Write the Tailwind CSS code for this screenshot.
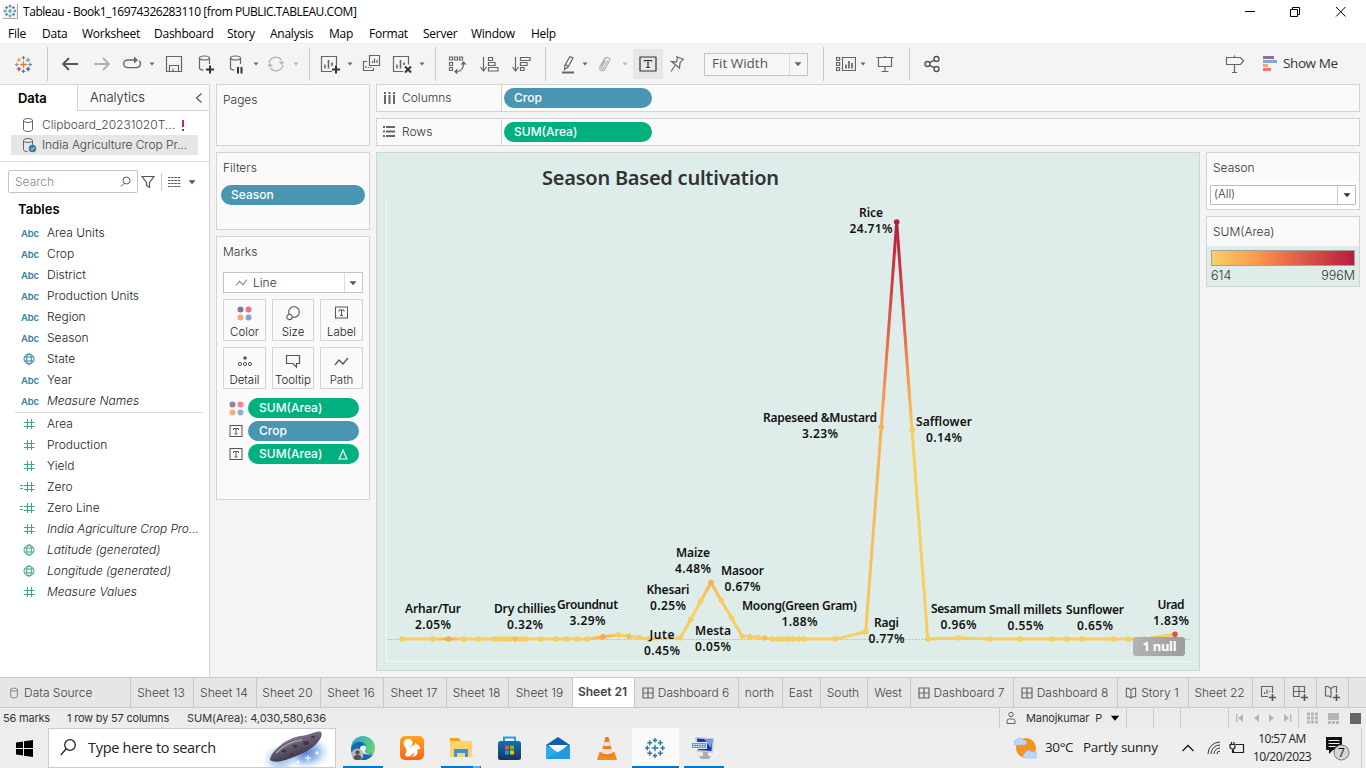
<!DOCTYPE html>
<html lang="en">
<head>
<meta charset="utf-8">
<title>Tableau - Book1_16974326283110</title>
<script src="https://cdn.jsdelivr.net/npm/@tailwindcss/browser@4"></script>
</head>
<body class="w-[1366px] h-[768px] overflow-hidden bg-[#f4f4f4] flex flex-col font-['Inter','Liberation_Sans',sans-serif] font-light text-[12px] text-[#222] whitespace-nowrap leading-none">
<svg class="hidden">
  <defs>
    <symbol id="tab" viewBox="0 0 20 20"><g fill="none" stroke-width="1.1"><path stroke="#e8762c" stroke-width="1.400" d="M10 6.500v7M6.500 10h7"/><path stroke="#59879b" d="M10 1v4M8 3h4M17 8v4M15 10h4"/><path stroke="#7099a6" d="M3 8v4M1 10h4"/><path stroke="#5b6591" d="M10 15v4M8 17h4"/><path stroke="#eb912c" d="M5.200 3v4.400M3 5.200h4.400"/><path stroke="#1f457e" d="M14.800 12.600v4.400M12.600 14.800h4.400"/><path stroke="#c72035" d="M5.200 12.600v4.400M3 14.800h4.400"/><path stroke="#59879b" d="M14.800 3v4.400M12.600 5.200h4.400"/></g></symbol>
    <symbol id="tabb" viewBox="0 0 20 20"><path fill="none" stroke="#2b7a9e" stroke-width="1.250" d="M10 7v6M7 10h6M10 1v4M8 3h4M17 8v4M15 10h4M3 8v4M1 10h4M10 15v4M8 17h4M5.200 3v4.400M3 5.200h4.400M14.800 12.600v4.400M12.600 14.800h4.400M5.200 12.600v4.400M3 14.800h4.400M14.800 3v4.400M12.600 5.200h4.400"/></symbol>
    <symbol id="caret" viewBox="0 0 8 8"><path fill="currentColor" d="M1.500 2.500h5L4 5.500z"/></symbol>
    <symbol id="car" viewBox="0 0 10 10"><path fill="currentColor" d="M1.500 3.200h7L5 7.200z"/></symbol>
    <symbol id="cyl" viewBox="0 0 12 16"><g fill="none" stroke="#666"><ellipse cx="6" cy="3.500" rx="4.500" ry="2"/><path d="M1.500 3.500v9c0 2.600 9 2.600 9 0v-9"/></g></symbol>
    <symbol id="globe" viewBox="0 0 12 12"><g fill="none" stroke="currentColor"><circle cx="6" cy="6" r="5"/><ellipse cx="6" cy="6" rx="2.300" ry="5"/><path d="M1.500 4h9M1.500 8h9"/></g></symbol>
    <symbol id="hash" viewBox="0 0 12 12"><path fill="none" stroke="#40a587" d="M4.500 1v10M8.500 1v10M1 4.500h10.500M1 8.500h10.500"/></symbol>
    <symbol id="ehash" viewBox="0 0 16 12"><path fill="none" stroke="#40a587" d="M8.500 1v10M12.500 1v10M5 4.500h10.500M5 8.500h10.500M1 4.500h3M1 7.500h3"/></symbol>
    <symbol id="tbox" viewBox="0 0 14 13"><rect x=".5" y=".5" width="12" height="11" fill="none" stroke="#555"/><path fill="none" stroke="#555" d="M4 5V3.500h5V5M6.500 3.500V9M5 9h3"/></symbol>
    <symbol id="dots" viewBox="0 0 15 15"><circle cx="3.500" cy="3.500" r="3" fill="#8b729b"/><circle cx="11.500" cy="3.500" r="3" fill="#fa7082"/><circle cx="3.500" cy="11.500" r="3" fill="#f3a678"/><circle cx="11.500" cy="11.500" r="3" fill="#83a8cf"/></symbol>
    <symbol id="dash" viewBox="0 0 12 12"><path fill="none" stroke="#666" stroke-width="1.200" d="M1 1h10v10H1zM6 1v10M1 6h10"/></symbol>
    <symbol id="story" viewBox="0 0 12 13"><path fill="none" stroke="#666" stroke-width="1.200" d="M1 1.500h2.500L6 3.500l2.500-2H11v9H8L6 12l-2-1.500H1zM6 3.500V12"/></symbol>
    <symbol id="squig" viewBox="0 0 16 12"><path fill="none" stroke="currentColor" stroke-width="1.300" d="M1 9l4-5 4 4 5-6"/></symbol>
  </defs>
</svg>

<!-- Title bar -->
<header class="h-[23px] shrink-0 bg-white text-black font-normal flex items-center font-['Open_Sans','Noto_Sans',sans-serif]">
  <span class="ml-[3px] w-[15px] h-[15px] bg-[#f4f4f4] border-r border-b border-[#aaa]"><svg class="w-[14px] h-[14px]"><use href="#tabb"/></svg></span>
  <span class="ml-[5px] text-[12px] tracking-[-0.45px]">Tableau - Book1_16974326283110 [from PUBLIC.TABLEAU.COM]</span>
  <svg class="ml-auto mr-[18px] mb-[2px] w-[104px] h-[14px]" viewBox="0 0 104 14" fill="none" stroke="#000"><path d="M1 7.500h10"/><path d="M46.500 5.500h7v7h-7zM48.500 5.500v-2h7v7h-2"/><path d="M92 3l9.500 9.500M101.500 3L92 12.500"/></svg>
</header>

<!-- Menu -->
<nav class="h-5 shrink-0 bg-white text-black font-normal flex items-center pl-2 pt-px text-[12px] tracking-[-0.25px] font-['Open_Sans','Noto_Sans',sans-serif]">
  <span class="w-[34px]">File</span><span class="w-10">Data</span><span class="w-[72px]">Worksheet</span><span class="w-[73px]">Dashboard</span><span class="w-[43px]">Story</span><span class="w-[59px]">Analysis</span><span class="w-10">Map</span><span class="w-[54px]">Format</span><span class="w-12">Server</span><span class="w-[60px]">Window</span><span>Help</span>
</nav>

<!-- Toolbar -->
<div class="h-[41px] shrink-0 border-t border-[#efefef] flex items-center text-[#666] [&>*]:shrink-0">
  <svg class="ml-[14px] w-[19px] h-[19px]"><use href="#tab"/></svg>
  <i class="ml-[14px] w-px h-[34px] bg-[#ccc]"></i>
  <svg class="ml-3 w-5 h-5" fill="none" stroke="#555" stroke-width="1.800"><path d="M18 10H3M9 4l-6 6 6 6"/></svg>
  <svg class="ml-3 w-5 h-5" fill="none" stroke="#b0b0b0" stroke-width="1.800"><path d="M2 10h15M11 4l6 6-6 6"/></svg>
  <svg class="ml-2.5 w-5 h-5" fill="none" stroke="#666" stroke-width="1.400"><path d="M13 6H5.500a3.800 3.800 0 0 0 0 7.600h9A3.800 3.800 0 0 0 17 6.800"/><path fill="#666" stroke="none" d="M12 2.500v7l4-3.500z"/></svg>
  <svg class="ml-1.5 w-2 h-2"><use href="#caret"/></svg>
  <svg class="ml-2 w-5 h-5" fill="none" stroke="#666" stroke-width="1.200"><path d="M2.500 2.500h15v15h-15zM5.500 17.500v-6h9v6M9 17.500v-3"/></svg>
  <svg class="ml-[11px] w-5 h-5" fill="none" stroke="#666" stroke-width="1.200"><ellipse cx="9.500" cy="4" rx="5" ry="2"/><path d="M4.500 4v10c0 1 1.500 2 4 2M14.500 4v6"/><path stroke="#333" stroke-width="2" d="M15 11.500v8M11 15.500h8"/></svg>
  <svg class="ml-[11px] w-5 h-5" fill="none" stroke="#666" stroke-width="1.200"><ellipse cx="9.500" cy="4" rx="5" ry="2"/><path d="M4.500 4v10c0 1 1.500 2 4 2M14.500 4v6"/><path stroke="#333" stroke-width="2" d="M12 13v6.500M15.500 13v6.500"/></svg>
  <svg class="ml-1.5 w-2 h-2"><use href="#caret"/></svg>
  <svg class="ml-1.5 w-5 h-5" fill="none" stroke="#b5b5b5" stroke-width="1.400"><path d="M3 9a7 7 0 0 1 12.500-3M17 11A7 7 0 0 1 4.500 14"/><path fill="#b5b5b5" stroke="none" d="M12.500 7.500h6L15.500 11zM1 12.500h6L4 9z"/></svg>
  <svg class="ml-1.5 w-2 h-2 text-[#b5b5b5]"><use href="#caret"/></svg>
  <i class="ml-[9px] w-px h-[34px] bg-[#ccc]"></i>
  <svg class="ml-2.5 w-5 h-5" fill="none" stroke="#666" stroke-width="1.200"><path d="M12 17.500H1.500v-15h15v9"/><path stroke-width="1.600" d="M5 14.500v-4M8.500 14.500V6M12 12V8.500"/><path stroke="#333" stroke-width="2" d="M16 11.500v8M12 15.500h8"/></svg>
  <svg class="ml-1.5 w-2 h-2"><use href="#caret"/></svg>
  <svg class="ml-[7px] w-5 h-5" fill="none" stroke="#666" stroke-width="1.200"><path d="M8.500 1.500h10v10h-10zM6 7.500H2.500v9h10V14"/><path d="M11.500 9V7M13.500 9V4.500M16 9V6M5 14v-2M7.500 14v-1M10 14v-1"/></svg>
  <svg class="ml-[11px] w-5 h-5" fill="none" stroke="#666" stroke-width="1.200"><path d="M11 17.500H1.500v-15h15v8"/><path stroke-width="1.600" d="M5 14.500v-4M8.500 14.500V6M12 11V8.500"/><path stroke="#333" stroke-width="2" d="M13 12.500l6 6M19 12.500l-6 6"/></svg>
  <svg class="ml-1.5 w-2 h-2"><use href="#caret"/></svg>
  <i class="ml-[9px] w-px h-[34px] bg-[#ccc]"></i>
  <svg class="ml-[11px] w-5 h-5" fill="none" stroke="#666" stroke-width="1.200"><path d="M2.500 3h3v3h-3zM7.500 3h3v3h-3zM12.500 3h3v3h-3zM2.500 8.500h3v3h-3zM2.500 13.500h3v3h-3zM16.500 9c0 5-2 8-6 8.500"/><path fill="#666" stroke="none" d="M13.500 10.500l3-3.500 3 3.500zM10.500 14.500v6L7 17.500z"/></svg>
  <svg class="ml-[13px] w-5 h-5" fill="none" stroke="#666" stroke-width="1.200"><path d="M3.500 3v14M.500 13l3 4 3-4M8.500 3.500h4v3h-4zM8.500 8.500h6.500v3H8.500zM8.500 13.500H18v3.500H8.500z"/></svg>
  <svg class="ml-3 w-5 h-5" fill="none" stroke="#666" stroke-width="1.200"><path d="M3.500 3v14M.500 13l3 4 3-4M8.500 3.500H18v3H8.500zM8.500 8.500h6.500v3H8.500zM8.500 13.500h3.500v3H8.500z"/></svg>
  <i class="ml-[13px] w-px h-[34px] bg-[#ccc]"></i>
  <svg class="ml-3 w-5 h-5" fill="none" stroke="#666" stroke-width="1.200"><path d="M12 2.500l3 1.500-5 9-3.500 2.500L7 11zM7.500 10.500l3 2"/><path stroke-width="2" d="M4 18.500h12"/></svg>
  <svg class="ml-[3px] w-2 h-2"><use href="#caret"/></svg>
  <svg class="ml-1.5 w-5 h-5" fill="none" stroke="#b0b0b0" stroke-width="1.200"><path d="M6.500 11l4-6.500c1.500-2.500 5.500-.5 4 2.300L10 15c-2 3.500-6.500 1-5-2.200l5.500-9.500M12.500 6.500L8.500 14c-1 1.200-2.500.5-2-1l3.500-6"/></svg>
  <svg class="ml-1.5 w-2 h-2 text-[#b5b5b5]"><use href="#caret"/></svg>
  <span class="ml-1 w-[30px] h-[30px] bg-[#e6e6e6] flex items-center justify-center"><svg class="w-[18px] h-4" fill="none" stroke="#333" stroke-width="1.200"><path d="M1 1h16v14H1zM5.500 5.500V4.500h7v1M9 4.500v7M7 11.500h4"/></svg></span>
  <svg class="ml-1 w-5 h-5" fill="none" stroke="#666" stroke-width="1.200"><path d="M9 2.500l8 3M10.500 3.500L9.500 8l-5-.5 8 6.500 .5-5 3-4M8 11.500l-4 6"/></svg>
  <span class="ml-[17px] w-[104px] h-[23px] bg-[#f6f6f6] border border-[#c4c4c4] flex items-center"><span class="ml-[7px] w-[77px] text-[13.500px] font-normal text-[#555] font-['Open_Sans']">Fit Width</span><span class="h-full flex items-center border-l border-[#ddd] pl-[3px]"><svg class="w-2.5 h-2.5"><use href="#car"/></svg></span></span>
  <i class="ml-[15px] w-px h-[34px] bg-[#ccc]"></i>
  <svg class="ml-3 w-5 h-5" fill="none" stroke="#666" stroke-width="1.200"><path d="M.600 3.500h3v3h-3zM.600 8.500h3v3h-3zM.600 13.500h3v3h-3zM6.500 3.500h13v13h-13z"/><path stroke-width="1.700" d="M10 14.500v-4M13 14.500V7M16 14.500V9"/></svg>
  <svg class="ml-[3px] w-2 h-2"><use href="#caret"/></svg>
  <svg class="ml-2 w-5 h-5" fill="none" stroke="#666" stroke-width="1.200"><path d="M1.500 3.500h17M3.500 3.500v9h13v-9M10 2v2M10 12.500v5M6.500 17.500h7"/></svg>
  <i class="ml-[14px] w-px h-[34px] bg-[#ccc]"></i>
  <svg class="ml-3 w-5 h-5" fill="none" stroke="#555" stroke-width="1.400"><circle cx="5.500" cy="10" r="2.500"/><circle cx="14.500" cy="5" r="2.500"/><circle cx="14.500" cy="15" r="2.500"/><path d="M7.700 8.700l4.600-2.500M7.700 11.300l4.600 2.500"/></svg>
  <svg class="ml-[283px] w-5 h-5" fill="none" stroke="#666" stroke-width="1.200"><path d="M1.500 3.500h14l3 3.500-3 3.500h-14zM9.500 1.500v2M9.500 10.500v8M7 18.500h5"/></svg>
  <svg class="ml-[18px] w-[15px] h-4"><path fill="#8b729b" d="M0 0h11v3H0z"/><path fill="#83a8cf" d="M0 4h14v3H0z"/><path fill="#f3a678" d="M0 8h5v3H0z"/><path fill="#fa7082" d="M0 12h8v3H0z"/></svg>
  <span class="ml-[5px] text-[13.500px] font-normal text-[#333] font-['Open_Sans'] tracking-[-0.4px]">Show Me</span>
</div>

<!-- Workspace -->
<main class="h-[593px] shrink-0 flex">
  <!-- Data pane -->
  <aside class="w-[210px] border-t border-r border-[#d4d4d4] bg-white flex flex-col">
    <div class="h-[26px] shrink-0 flex">
      <div class="w-[77px] pl-[18px] flex items-center font-semibold text-[13px] text-black tracking-[-0.1px]">Data</div>
      <div class="flex-1 bg-[#fafafa] border-l border-b border-[#d4d4d4] flex items-center pl-3 text-[13px]">Analytics<svg class="ml-auto mr-1.5 w-2 h-3" fill="none" stroke="#555" stroke-width="1.200"><path d="M6.500 1.500L1.500 6l5 4.500"/></svg></div>
    </div>
    <div class="mt-1 h-5 flex items-center pl-[22px] text-[#444]"><svg class="w-3 h-4"><use href="#cyl"/></svg><span class="ml-2 w-[136px]">Clipboard_20231020T...</span><b class="ml-1 w-[2px] flex flex-col gap-0.5"><i class="h-[7px] bg-[#c92a3c]"></i><i class="h-0.5 bg-[#c92a3c]"></i></b></div>
    <div class="h-5 ml-[11px] w-[187px] bg-[#e6e6e6] flex items-center pl-[11px] text-[#444]"><svg class="w-[15px] h-4" viewBox="0 0 15 16"><g fill="none" stroke="#666"><ellipse cx="6" cy="3.500" rx="4.500" ry="2"/><path d="M1.500 3.500v9c0 1.500 2 2 4 2M10.500 3.500V8"/></g><circle cx="10.500" cy="11.500" r="3.800" fill="#2f7fa3"/><path d="M8.800 11.500l1.300 1.300 2.300-2.500" fill="none" stroke="#fff"/></svg><span class="ml-[5px] tracking-[-0.05px]">India Agriculture Crop Pr...</span></div>
    <div class="mt-1.5 h-px shrink-0 bg-[#dcdcdc]"></div>
    <div class="mt-2 h-[23px] shrink-0 flex items-center pl-2">
      <div class="w-[130px] h-full border border-[#c4c4c4] rounded-[2px] flex items-center pl-1.5 text-[#888]">Search<svg class="ml-auto mr-1.5 w-[11px] h-3" fill="none" stroke="#555"><circle cx="6.500" cy="4.500" r="3.500"/><path d="M4 7.500L1 10.500"/></svg></div>
      <svg class="ml-[3px] w-3.5 h-3.5" fill="none" stroke="#555" stroke-width="1.200"><path d="M1 1.500h12L8.500 7.500v5l-3-2v-3z"/></svg>
      <i class="ml-[6px] w-px h-[18px] bg-[#ccc]"></i>
      <svg class="ml-1.5 w-[13px] h-2.5" stroke="#555" stroke-dasharray="2.500 .700"><path d="M0 .500h13M0 3.500h13M0 6.500h13M0 9.500h13"/></svg>
      <svg class="ml-[6px] w-2.5 h-2.5 text-[#555]"><use href="#car"/></svg>
    </div>
    <div class="h-[29px] pl-[18px] pt-[3px] flex items-center font-semibold text-[13px] text-black tracking-[0.05px]">Tables</div>
    <ul class="[&>li]:h-[21px] [&>li]:flex [&>li]:items-center [&_b]:w-8 [&_b]:text-[9.500px] [&_b]:font-semibold [&_b]:tracking-[-0.2px] [&_b]:text-[#35809d] [&_b]:pt-0.5 pl-[15px] [&_b]:pl-1.5 [&_svg]:ml-[8px] [&_svg]:mr-[12px] [&_svg]:w-3 [&_svg]:h-3 text-[12px]">
      <li><b>Abc</b>Area Units</li><li><b>Abc</b>Crop</li><li><b>Abc</b>District</li><li><b>Abc</b>Production Units</li><li><b>Abc</b>Region</li><li><b>Abc</b>Season</li>
      <li><svg class="text-[#35809d]"><use href="#globe"/></svg>State</li><li><b>Abc</b>Year</li><li class="italic"><b class="not-italic">Abc</b>Measure Names</li>
    </ul>
    <div class="mt-px mx-[15px] mr-[6px] h-px shrink-0 bg-[#dcdcdc]"></div>
    <ul class="[&>li]:h-[21px] [&>li]:flex [&>li]:items-center [&_svg]:ml-[23px] [&_svg]:mr-[12px] [&_svg]:w-3 [&_svg]:h-3 text-[12px] text-[#40a587] [&_span]:text-[#222]">
      <li><svg><use href="#hash"/></svg><span>Area</span></li>
      <li><svg><use href="#hash"/></svg><span>Production</span></li>
      <li><svg><use href="#hash"/></svg><span>Yield</span></li>
      <li><svg class="w-4! ml-[19px]!"><use href="#ehash"/></svg><span>Zero</span></li>
      <li><svg class="w-4! ml-[19px]!"><use href="#ehash"/></svg><span>Zero Line</span></li>
      <li class="italic"><svg><use href="#hash"/></svg><span class="tracking-[-0.1px]">India Agriculture Crop Pro...</span></li>
      <li class="italic"><svg><use href="#globe"/></svg><span>Latitude (generated)</span></li>
      <li class="italic"><svg><use href="#globe"/></svg><span>Longitude (generated)</span></li>
      <li class="italic"><svg><use href="#hash"/></svg><span>Measure Values</span></li>
    </ul>
  </aside>

  <!-- Cards -->
  <section class="ml-1.5 w-[154px] flex flex-col gap-1.5 text-[#333]">
    <div class="h-[62px] bg-[#fafafa] border border-[#d4d4d4] pl-1.5 pt-[9px]">Pages</div>
    <div class="h-[78px] bg-[#fafafa] border border-[#d4d4d4] px-1 pt-[9px]"><p class="pl-0.5">Filters</p><p class="mt-[11px] h-5 rounded-full bg-[#4996b2] text-white font-medium pl-2.5 flex items-center">Season</p></div>
    <div class="h-[264px] bg-[#fafafa] border border-[#d4d4d4] px-1.5 pt-[9px]">
      <p>Marks</p>
      <div class="mt-[14px] h-[21px] w-[140px] bg-white border border-[#c4c4c4] flex items-center pl-[11px]"><svg class="w-3.5 h-2.5 text-[#888]"><use href="#squig"/></svg><span class="ml-1 w-[94px]">Line</span><span class="h-full flex items-center border-l border-[#ddd] -ml-[3px] pl-[3px] text-[#555]"><svg class="w-2.5 h-2.5"><use href="#car"/></svg></span></div>
      <div class="mt-1.5 w-[140px] grid grid-cols-[43px_42px_43px] gap-x-1.5 gap-y-1.5 text-[11.500px] text-[#222] [&>div]:h-[42px] [&>div]:border [&>div]:border-[#d4d4d4] [&>div]:flex [&>div]:flex-col [&>div]:items-center [&>div]:justify-between [&>div]:pt-[6px] [&>div]:pb-[2px]">
        <div><svg class="w-[15px] h-[15px]"><use href="#dots"/></svg>Color</div>
        <div><svg class="w-4 h-4" fill="none" stroke="#666" stroke-width="1.200"><circle cx="9" cy="6" r="5.300"/><circle cx="4.500" cy="11" r="2.700" fill="#fafafa"/></svg>Size</div>
        <div><svg class="w-3.5 h-3.5"><use href="#tbox"/></svg>Label</div>
        <div><svg class="w-4 h-4" fill="none" stroke="#555"><circle cx="8" cy="4" r="1.800" fill="#555" stroke="none"/><circle cx="3" cy="10" r="1.600"/><circle cx="8" cy="10" r="1.600"/><circle cx="13" cy="10" r="1.600"/></svg>Detail</div>
        <div><svg class="w-4 h-4" fill="none" stroke="#555" stroke-width="1.200"><path d="M1.500 1.500h13v8h-3v3.500L8 9.500H1.500z"/></svg>Tooltip</div>
        <div class="text-[#333]"><svg class="w-4 h-4 text-[#555]"><use href="#squig"/></svg>Path</div>
      </div>
      <div class="mt-[9px] flex flex-col gap-[3px] pl-1.5 [&>div]:flex [&>div]:items-center [&>div]:gap-1 [&_span]:w-[111px] [&_span]:shrink-0 [&_span]:h-5 [&_span]:rounded-full [&_span]:pl-[11px] [&_span]:flex [&_span]:items-center text-white font-medium [&_svg]:w-[15px] [&_svg]:shrink-0">
        <div><svg class="h-[15px] opacity-90"><use href="#dots"/></svg><span class="bg-[#00b180]">SUM(Area)</span></div>
        <div><svg class="h-[13px]"><use href="#tbox"/></svg><span class="bg-[#4996b2]">Crop</span></div>
        <div><svg class="h-[13px]"><use href="#tbox"/></svg><span class="bg-[#00b180]">SUM(Area)<svg class="ml-auto mr-[11px] w-2.5! h-[11px]" fill="none" stroke="#fff" stroke-width="1.200"><path d="M5 1L1.200 10h7.600z"/></svg></span></div>
      </div>
    </div>
  </section>

  <!-- Shelves, view and legends -->
  <section class="ml-1.5 w-[984px] flex flex-col gap-1.5 text-[#333]">
    <div class="h-7 bg-[#fafafa] border border-[#d4d4d4] flex items-center"><div class="w-[125px] h-full border-r border-[#d4d4d4] flex items-center pl-1.5"><svg class="w-3 h-3" stroke="#666" stroke-width="2"><path stroke-dasharray="2 1 20" d="M2 0v12M6.500 0v12M11 0v12"/></svg><span class="ml-[7px]">Columns</span></div><span class="ml-0.5 w-[148px] h-5 rounded-full bg-[#4996b2] text-white font-medium flex items-center pl-2.5">Crop</span></div>
    <div class="h-7 bg-[#fafafa] border border-[#d4d4d4] flex items-center"><div class="w-[125px] h-full border-r border-[#d4d4d4] flex items-center pl-1.5"><svg class="w-3 h-3 -mt-[3px]" stroke="#666" stroke-width="2"><path stroke-dasharray="2 1 20" d="M0 2h12M0 6.500h12M0 11h12"/></svg><span class="ml-[7px]">Rows</span></div><span class="ml-0.5 w-[148px] h-5 rounded-full bg-[#00b180] text-white font-medium flex items-center pl-2.5">SUM(Area)</span></div>
    <div class="flex items-start gap-1.5">
      <svg class="w-[824px] h-[519px] shrink-0 font-['Noto_Sans','Open_Sans',sans-serif] font-semibold" viewBox="376 152 824 519">
        <defs>
          <linearGradient id="gl" gradientUnits="userSpaceOnUse" x1="0" y1="222" x2="0" y2="632"><stop offset="0" stop-color="#b71d3e"/><stop offset=".2" stop-color="#d94b47"/><stop offset=".36" stop-color="#f5834a"/><stop offset=".5" stop-color="#f8b058"/><stop offset="1" stop-color="#f6c95f"/></linearGradient>
          <linearGradient id="gr" gradientUnits="userSpaceOnUse" x1="0" y1="222" x2="0" y2="639"><stop offset="0" stop-color="#b71d3e"/><stop offset=".2" stop-color="#d94b47"/><stop offset=".35" stop-color="#f98b4b"/><stop offset=".5" stop-color="#f5cf60"/><stop offset="1" stop-color="#f5cf60"/></linearGradient>
          <linearGradient id="gb" gradientUnits="userSpaceOnUse" x1="402" y1="0" x2="866" y2="0"><stop offset="0" stop-color="#f5cf60"/><stop offset=".07" stop-color="#f5cf60"/><stop offset=".1" stop-color="#fba94f"/><stop offset=".13" stop-color="#f5cf60"/><stop offset=".4" stop-color="#f5cf60"/><stop offset=".433" stop-color="#fba94f"/><stop offset=".465" stop-color="#f5cf60"/><stop offset=".64" stop-color="#f5cf60"/><stop offset=".666" stop-color="#f9b555"/><stop offset=".7" stop-color="#f5cf60"/><stop offset="1" stop-color="#f5cf60"/></linearGradient>
          <linearGradient id="nul"><stop offset="0" stop-color="#b1b4b2"/><stop offset="1" stop-color="#9b9d9c"/></linearGradient>
        </defs>
        <rect x="376.500" y="152.500" width="823" height="518" fill="#dfedea" stroke="#d0d4d3"/>
        <path d="M386.500 199.500v462H1191" fill="none" stroke="#f4f8f7"/>
        <path d="M387 639.500h803" stroke="#bfc6c4" stroke-dasharray="2 1"/>
        <g fill="none" stroke-width="3" stroke-linejoin="round">
          <path stroke="url(#gb)" d="M402 639H587.300L603 636.800 618.300 635 628.700 636.300 639 637.700 649 639 680.300 638 690.700 619.500 700.700 601 711 582.500 721.300 600.500 731.700 618 742 636 757.700 637.500 772.700 639.100H835L865.700 631.700"/>
          <path stroke="url(#gl)" d="M865.700 631.700L881.300 427 896.700 222"/>
          <path stroke="url(#gr)" d="M896.700 222L912 430 927.700 639"/>
          <path stroke="#f5cf60" d="M927.700 639L958.700 638 989.700 639H1144L1175 634.300"/>
        </g>
        <g id="pts" fill="#f5cd60"></g>
        <text x="542" y="185" font-size="20" textLength="237" fill="#333">Season Based cultivation</text>
        <g id="labels" font-size="12" fill="#111" text-anchor="middle"></g>
        <rect x="1133" y="637" width="52" height="19" rx="3" fill="url(#nul)"/>
        <text x="1142.500" y="651" font-size="13" textLength="34" fill="#fff" font-weight="700">1 null</text>
      </svg>
      <div class="w-[154px] flex flex-col gap-1.5">
        <div class="h-[58px] border border-[#d4d4d4] bg-white"><p class="h-[29px] bg-[#fafafa] pl-1.5 flex items-center">Season</p><div class="mt-[3px] mx-[3px] h-5 border border-[#bbb] rounded-[1px] flex items-center pl-[3px] text-[11.500px]">(All)<span class="ml-auto h-full w-[18px] border-l border-[#ccc] text-[#333] flex items-center justify-center"><svg class="w-2.5 h-2.5"><use href="#car"/></svg></span></div></div>
        <div class="h-[71px] border border-[#d4d4d4] bg-[#dfedea]"><p class="h-[29px] bg-[#fafafa] pl-1.5 flex items-center">SUM(Area)</p><div class="mt-1 mx-1 h-4 border border-[#a5a294] bg-[linear-gradient(90deg,#f4d166,#fb964e_33%,#e46a4a_55%,#b71d3e)]"></div><p class="mx-1 mt-1 flex justify-between text-[12.500px]"><span>614</span><span>996M</span></p></div>
      </div>
    </div>
  </section>
</main>

<!-- Sheet tabs -->
<nav class="h-[31px] shrink-0 border-y border-[#c8c8c8] bg-[#e6e6e6] flex text-[#444] [&>span]:flex [&>span]:items-center [&>span]:justify-center [&>span]:gap-1 [&>span]:border-r [&>span]:border-[#c8c8c8] [&>span]:pr-0.5 [&_svg]:w-3 [&_svg]:h-3">
  <span class="w-[131px] justify-start! pl-2"><svg><use href="#cyl"/></svg>Data Source</span><span class="w-[63px]">Sheet 13</span><span class="w-[63px]">Sheet 14</span><span class="w-[64px]">Sheet 20</span><span class="w-[63px]">Sheet 16</span><span class="w-[63px]">Sheet 17</span><span class="w-[62px]">Sheet 18</span><span class="w-[64px]">Sheet 19</span><span class="w-[62px] bg-white text-[#444] font-semibold pb-0.5">Sheet 21</span><span class="w-[104px]"><svg><use href="#dash"/></svg>Dashboard 6</span><span class="w-[44px]">north</span><span class="w-[38px]">East</span><span class="w-[47px]">South</span><span class="w-[43px]">West</span><span class="w-[103px]"><svg><use href="#dash"/></svg>Dashboard 7</span><span class="w-[104px]"><svg><use href="#dash"/></svg>Dashboard 8</span><span class="w-[71px]"><svg><use href="#story"/></svg>Story 1</span><span class="w-[64px]">Sheet 22</span>
  <span class="w-8"><svg class="w-4! h-4!" fill="none" stroke="#666" stroke-width="1.200"><path d="M8 11.500H1.500v-10h11V8M4.500 9V7M7 9V4.500M9.500 7V6"/><path stroke="#555" stroke-width="1.600" d="M12.500 9v7M9 12.500h7"/></svg></span>
  <span class="w-8"><svg class="w-4! h-4!" fill="none" stroke="#666" stroke-width="1.200"><path d="M8 11.500H1.500v-10h11V8M7 1.500v10M1.500 6.500h11"/><path stroke="#555" stroke-width="1.600" d="M12.500 9v7M9 12.500h7"/></svg></span>
  <span class="w-8"><svg class="w-4! h-4!" fill="none" stroke="#666" stroke-width="1.200"><path d="M7 12.500l-2-1.500H1.500V1.500H4L7 3.500l3-2h2.500V8M7 3.500v9"/><path stroke="#555" stroke-width="1.600" d="M12.500 9v7M9 12.500h7"/></svg></span>
</nav>

<!-- Status bar -->
<div class="h-5 shrink-0 bg-[#ececec] flex items-center text-[11px] font-normal text-[#333] [&>i]:w-px [&>i]:h-full [&>i]:bg-[#ccc] [&>*]:shrink-0">
  <span class="ml-[3px] w-16 tracking-[-0.2px]">56 marks</span><span class="w-[120px] tracking-[-0.2px]">1 row by 57 columns</span><span class="w-[812px] tracking-[-0.05px]">SUM(Area): 4,030,580,636</span>
  <i></i><svg class="ml-1.5 w-2.5 h-3.5" fill="none" stroke="#666"><circle cx="5" cy="3.500" r="2.200"/><path d="M1 12.500V10a2 2 0 0 1 2-2h4a2 2 0 0 1 2 2v2.500z"/></svg><span class="ml-2.5 w-[83px] tracking-[-0.1px]">Manojkumar&nbsp; P</span><svg class="w-3 h-3 text-black"><use href="#car"/></svg>
  <i class="ml-[5px]"></i><i class="ml-[26px]"></i><i class="ml-[26px]"></i><i class="ml-[47px]"></i>
  <svg class="ml-1.5 w-[58px] h-2.5" fill="#b5b5b5"><path d="M1 1h1.300v8H1zM8 1v8L3 5zM24 1v8l-5-4zM34 1v8l5-4zM49 1v8l5-4zM55 1h1.300v8H55z"/></svg>
  <i class="ml-[5px]"></i>
  <svg class="ml-2 w-[54px] h-3"><path stroke="#b5b5b5" stroke-width="3" stroke-dasharray="3 1" d="M0 2h11M0 6h11M0 10h11M21 10.500h11"/><path fill="#b5b5b5" d="M21 1h11v7H21z"/><path fill="#666" d="M43 1h11v11H43z"/></svg>
</div>

<!-- Taskbar -->
<footer class="h-10 shrink-0 bg-[#eee] flex font-normal text-[#222] font-['Open_Sans','Noto_Sans',sans-serif]">
  <div class="w-12 shrink-0 flex items-center justify-center"><svg class="w-[17px] h-[17px]"><path d="M0 2.500l7-1v6.500H0zM8 1.300L17 0v8H8zM0 9h7v6.500l-7-1zM8 9h9v8l-9-1.300z"/></svg></div>
  <div class="w-[288px] shrink-0 bg-white border border-[#ccc] flex items-center pl-[11px] text-[14.500px]"><svg class="w-4 h-5" fill="none" stroke="#222" stroke-width="1.300"><circle cx="10" cy="7" r="5.300"/><path d="M6.200 10.800L.800 17"/></svg><span class="ml-[12px] pt-px tracking-[-0.3px]">Type here to search</span>
    <svg class="ml-auto mr-[3px] w-[70px] h-[38px]" viewBox="0 0 70 38"><defs><radialGradient id="glow"><stop offset="0" stop-color="#5c7fd6"/><stop offset=".5" stop-color="#9fc4ee"/><stop offset="1" stop-color="#fff" stop-opacity="0"/></radialGradient><linearGradient id="rock" x2=".6" y2="1"><stop offset="0" stop-color="#a59aae"/><stop offset=".5" stop-color="#6c6177"/><stop offset="1" stop-color="#2b2735"/></linearGradient></defs><ellipse cx="43" cy="23" rx="28" ry="19" fill="url(#glow)"/><ellipse cx="18" cy="30" rx="20" ry="16" fill="url(#glow)" opacity=".6"/><path d="M8 31C9 23 22 10 38 7c9 0 16-6 21-4 3 4-4 14-16 20-12 6-29 13-35 8z" fill="url(#rock)"/><path d="M14 24c7-7 16-12 26-13" stroke="#c0b8ca" stroke-width="1.500" fill="none" opacity=".7"/><g fill="#3d3648"><ellipse cx="22" cy="22" rx="2.500" ry="1.500"/><ellipse cx="33" cy="17" rx="2.500" ry="1.500"/><ellipse cx="44" cy="14" rx="3" ry="2"/><ellipse cx="51" cy="8" rx="2" ry="1.300"/><ellipse cx="30" cy="25" rx="2" ry="1.200"/></g><path d="M46 26v6M43 29h6M36 31v4M34 33h4M55 22v4M53 24h4" stroke="#fff"/></svg>
  </div>
  <div class="ml-[3px] flex [&>div]:relative [&>div]:flex [&>div]:items-center [&>div]:justify-center [&>div]:w-[49px] [&_svg]:mr-[1px] [&_i]:absolute [&_i]:bottom-0 [&_i]:left-[4px] [&_i]:w-10 [&_i]:h-0.5 [&_i]:bg-[#0078d7]">
    <div><svg class="w-6 h-6" viewBox="0 0 24 24"><defs><linearGradient id="ed" x2="1" y2=".5"><stop offset="0" stop-color="#2aa3e0"/><stop offset="1" stop-color="#66d36b"/></linearGradient></defs><circle cx="12" cy="12" r="12" fill="url(#ed)"/><path d="M0 13C1 5 12 3 15 10c1 3-2 4-1 6 2 3 7 2 9 0-2 6-8 9-13 8C4 23 0 19 0 13z" fill="#1465b4"/><path d="M9 12c1-3 5-3 6-1s-2 3-1 5 7 4 9.500-.500C24 19 18 19 14 18s-5-3-5-6z" fill="#eef6f6"/><circle cx="6.500" cy="18.500" r="6" fill="#b9b9b9"/><circle cx="6.500" cy="16.500" r="2.200" fill="#555"/><path d="M2.500 22.500c0-5 8-5 8 0-2 2-6 2-8 0z" fill="#555"/></svg><i></i></div>
    <div><svg class="w-6 h-6" viewBox="0 0 24 24"><defs><linearGradient id="uc" x2="0" y2="1"><stop offset="0" stop-color="#ffa51f"/><stop offset="1" stop-color="#f96316"/></linearGradient></defs><rect width="24" height="24" rx="5" fill="url(#uc)"/><path d="M10 20.500H6c-1.500-2 .500-4 .500-6s-1.500-3-2.500-5.500C3 5 6 2.500 9 3s4.500 3.500 3 6c-1 1.500-2.500 2-2.500 3.500 1.500-2 3-3 5-3.500l1-2.500 1.500 2c2 .500 3 2 3.500 3.500-.500 1.500-2 1.500-3.500 1.500 1.500 2.500 0 7-3.500 7H11c2.500-1 3.500-2 3.500-4-1.500 1.500-3 2-4.500 4z" fill="#fff"/></svg></div>
    <div class="w-[48px]!"><svg class="w-[22px] h-5" viewBox="0 0 22 20"><path fill="#e9a820" d="M0 0h9l2 3H0z"/><path fill="#fbd46b" d="M0 3h22v16H0z"/><path fill="#3f91d8" d="M4 11h14v8h-3v-4H7v4H4z"/></svg><i></i><i class="left-[36px]! w-[7px]! bg-[#66b0ea]!"></i></div>
    <div><svg class="w-[23px] h-6" viewBox="0 0 23 24"><defs><linearGradient id="st" x2="0" y2="1"><stop offset="0" stop-color="#0f70c0"/><stop offset="1" stop-color="#1d3358"/></linearGradient></defs><path d="M6 7V1.500h11V7" fill="none" stroke="#1fa3e6" stroke-width="2"/><rect y="5" width="23" height="19" rx="2.500" fill="url(#st)"/><path fill="#f25022" d="M7 9.500h4v4H7z"/><path fill="#7fba00" d="M12 9.500h4v4h-4z"/><path fill="#00a4ef" d="M7 14.500h4v4H7z"/><path fill="#ffb900" d="M12 14.500h4v4h-4z"/></svg></div>
    <div><svg class="w-6 h-[22px]" viewBox="0 0 24 22"><path fill="#0d5eaf" d="M0 8l12-8 12 8v6H0z"/><path fill="#f4f8fb" d="M2 8h20l-9 8h-2z"/><path fill="#2cacec" d="M0 8l12 7.500L24 8v14H0z"/><path fill="#168fdb" d="M0 22l24-14v14z" opacity=".6"/></svg></div>
    <div><svg class="w-5 h-[23px]" viewBox="0 0 20 23"><path fill="#f58a1f" d="M2.500 15h15L20 23H0z"/><path fill="#f07c12" d="M8.500 0h3L16 18c-3 2-9 2-12 0z"/><path fill="#e4e4e4" d="M7.300 5h5.400l1 4H6.300zM5.300 12h9.400l1 4c-3 1.500-8.400 1.500-11.400 0z"/></svg></div>
    <div class="bg-[#fafafa] w-[47px]!"><svg class="w-[22px] h-[22px]"><use href="#tabb"/></svg><i class="left-0! w-[47px]!"></i></div>
    <div><svg class="w-6 h-6" viewBox="0 0 24 24"><path fill="#c9ccd4" d="M4 1l19 1-1 15-16-1z"/><path fill="#1738b4" d="M6 2.500l15.500 1-1 11.500L7 14z"/><path fill="#6fa5ea" d="M13 3l8.500.500L20 12z"/><path fill="#5ba0e0" stroke="#e6f0fa" d="M.500 6.500h15v6H.500z"/><path stroke="#e6f0fa" stroke-dasharray="1.500 1" d="M2 8.500h12M2 10.500h12"/><path fill="#a9adb5" d="M12 16h5v4h3l-2 3h-8l-2-3h4z"/></svg><i class="left-[5px]!"></i></div>
  </div>
  <div class="ml-auto flex items-center text-[13.500px] [&>*]:shrink-0">
    <svg class="w-6 h-6" viewBox="0 0 24 24"><circle cx="13" cy="12" r="10" fill="#f6921e"/><path d="M2 9a3 3 0 0 1 1-5 4 4 0 0 1 7 0 2.500 2.500 0 0 1 2 5zM11 22a3 3 0 0 1 1-5 4 4 0 0 1 7-1 3 3 0 0 1 4 6z" fill="#bcd6f5" stroke="#8fb4e0" stroke-width=".5"/></svg>
    <span class="ml-2 w-[38px] tracking-[-0.4px]">30°C</span><span class="w-[98px] tracking-[-0.25px]">Partly sunny</span>
    <svg class="w-3.5 h-3" fill="none" stroke="#222" stroke-width="1.500"><path d="M1.500 9L7 3.500 12.500 9"/></svg>
    <svg class="ml-3 w-3.5 h-3.5" fill="none" stroke="#333"><path d="M1 13A12 12 0 0 1 13 1M4 13a9 9 0 0 1 9-9M7 13a6 6 0 0 1 6-6M10 13a3 3 0 0 1 3-3"/></svg>
    <svg class="ml-2 w-4 h-4" fill="none" stroke="#222" stroke-width="1.200"><path d="M7 4.500h7.500v8h-10V10M1 4.500h5V7c0 1-1 2-2.500 2S1 8 1 7zM2.500 4.500V2M5 4.500V2M3.500 9v3.500h2"/></svg>
    <div class="ml-1.5 w-[62px] text-[12px] leading-[18px] text-center tracking-[-0.55px]">10:57 AM<br>10/20/2023</div>
    <svg class="ml-3 w-[26px] h-[26px]" viewBox="0 0 26 26"><path d="M1 2h16v13H8l-4 4v-4H1z" fill="#111"/><path d="M3.500 5.500h11M3.500 8.500h11M3.500 11.500h7" stroke="#eee"/><circle cx="16.500" cy="17.500" r="7.500" fill="#d6d6d6" stroke="#777"/><text x="16.500" y="22" font-size="12" text-anchor="middle" fill="#111">7</text></svg>
    <i class="ml-[10px] mr-1 w-px h-10 bg-[#ccc]"></i>
  </div>
</footer>

<script>
const NS = 'http://www.w3.org/2000/svg';
function add(parent, tag, attrs, text) {
  const e = document.createElementNS(NS, tag);
  for (const k in attrs) e.setAttribute(k, attrs[k]);
  if (text) e.textContent = text;
  parent.appendChild(e);
}
const pts = document.getElementById('pts');
const base = [402,432.7,463.7,479,494.7,499.7,504.7,510,520.3,525.3,541,556.3,566.7,577,587.3,649,772.7,778,783,788,793.5,799,804,835,927.7,989.7,1020.5,1051.3,1066.7,1082,1113,1128.5,1144].map(x => [x, 639]);
const raised = [[448.3,639,'#fba94f'],[515,639,'#f9bd58'],[603,636.8,'#fba94f'],[618.3,635],[628.7,636.3,'#f8bd5a'],[639,637.7],[680.3,638],[690.7,619.5],[700.7,601],[711,582.5,'#f9b052'],[721.3,600.5],[731.7,618],[742,636],[749.7,636.7],[757.7,637.5],[765,638,'#f9bd58'],[865.7,631.7],[881.3,427,'#fbb255'],[896.7,222,'#b71d3e'],[912,430],[958.7,638],[1175,634.3,'#e1523f']];
for (const [x, y, c] of [...base, ...raised]) add(pts, 'circle', c ? {cx: x, cy: y, r: 2.8, fill: c} : {cx: x, cy: y, r: 2.8});
const labels = document.getElementById('labels');
[['Rice',871,217,24,'24.71%'],['Rapeseed &Mustard',820,422,114,'3.23%'],['Safflower',944,426,56,'0.14%'],['Maize',693,557,34,'4.48%'],['Masoor',742.5,575,43,'0.67%'],['Khesari',668,594,43,'0.25%'],['Arhar/Tur',433,613,56,'2.05%'],['Dry chillies',525,613,62,'0.32%'],['Groundnut',587.5,609,61,'3.29%'],['Jute',662,639,25,'0.45%'],['Mesta',713,635,36,'0.05%'],['Moong(Green Gram)',799.5,610,115,'1.88%'],['Ragi',886.5,627,25,'0.77%'],['Sesamum',958.5,613,55,'0.96%'],['Small millets',1025.5,614,73,'0.55%'],['Sunflower',1095,614,58,'0.65%'],['Urad',1171,609,27,'1.83%']].forEach(([n, x, y, w, p]) => {
  add(labels, 'text', {x, y, textLength: w}, n);
  add(labels, 'text', {x, y: y + 16, textLength: p.length > 5 ? 43 : 36}, p);
});
</script>
</body>
</html>
